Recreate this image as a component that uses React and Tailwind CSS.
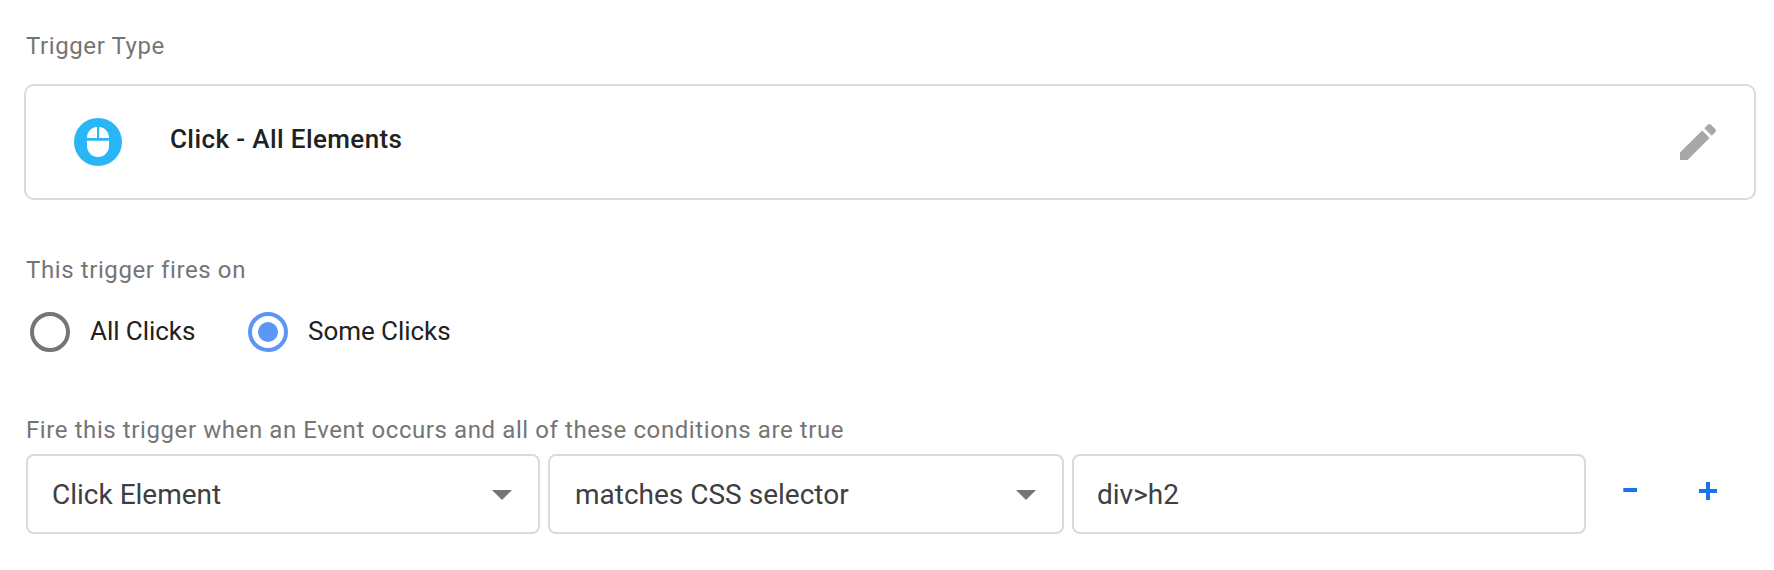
const Label = ({ children, className = "" }) => (
  <div className={"ml-[26px] h-8 whitespace-nowrap text-[24px] leading-8 text-[#757575] " + className}>{children}</div>
);

const Field = ({ text, arrow, className = "" }) => (
  <div className={"flex h-20 shrink-0 items-center justify-between rounded-lg border-2 border-[#dadada] pr-[26px] pt-0.5 text-[28px] text-[#3c4043] " + className}>
    <span className="whitespace-nowrap">{text}</span>
    {arrow && (
      <svg className="h-[10px] w-5" viewBox="0 0 20 10"><path d="M0 0h20L10 10z" fill="#757575" /></svg>
    )}
  </div>
);

const Radio = ({ text, checked, className = "" }) => (
  <div className={"flex items-center " + className}>
    <svg className="mr-5 h-10 w-10" viewBox="0 0 40 40">
      <circle cx="20" cy="20" r="18" fill="none" stroke={checked ? "#5b95f5" : "#757575"} strokeWidth="4" />
      {checked && <circle cx="20" cy="20" r="10" fill="#5b95f5" />}
    </svg>
    <span className="-mt-0.5 whitespace-nowrap text-[26px] leading-[38px] tracking-[-0.05px] text-[#212121]">{text}</span>
  </div>
);

export default function App() {
  return (
    <main className="h-[570px] w-[1774px] overflow-hidden bg-white pt-[30px] font-['Roboto',sans-serif]">
      <Label className="tracking-[0.6px]">Trigger Type</Label>
      <section className="ml-6 mt-[22px] flex h-[116px] w-[1732px] items-center rounded-[10px] border-2 border-[#dadada] pl-12 pr-8">
        <svg className="h-12 w-12" viewBox="0 0 48 48">
          <circle cx="24" cy="24" r="24" fill="#29b6f6" />
          <path d="M13 20C13 14 17 9.500 23 9v11zM25.200 9C31 9.500 35 14 35 20h-9.800zM13 22.700h22v5.300a11 11 0 0 1-22 0z" fill="#fff" />
        </svg>
        <h1 className="mb-1.5 ml-12 flex-1 text-[26px] font-medium tracking-[0.4px] text-[#212121]">Click - All Elements</h1>
        <svg className="h-12 w-12" viewBox="0 0 24 24" fill="#a8a8a8">
          <path d="M3 17.25V21h3.75L17.81 9.94l-3.75-3.75L3 17.25zM20.71 7.04a1 1 0 0 0 0-1.41l-2.34-2.34a1 1 0 0 0-1.41 0l-1.83 1.83 3.75 3.75 1.83-1.83z" />
        </svg>
      </section>
      <Label className="mt-[54px] tracking-[0.6px]">This trigger fires on</Label>
      <div className="ml-[30px] mt-[26px] flex">
        <Radio text="All Clicks" className="w-[218px]" />
        <Radio text="Some Clicks" checked />
      </div>
      <Label className="mt-[62px] tracking-[0.59px]">Fire this trigger when an Event occurs and all of these conditions are true</Label>
      <div className="ml-[26px] mt-2 flex items-center">
        <Field text="Click Element" arrow className="w-[514px] pl-6" />
        <Field text="matches CSS selector" arrow className="ml-2 w-[516px] pl-[25px]" />
        <Field text="div>h2" className="ml-2 w-[514px] pl-[23px]" />
        <svg className="ml-9 h-8 w-[100px]" viewBox="0 0 100 32" fill="#1a73e8">
          <path d="M1.300 10h13.700v4H1.300zM77 11h7V4h4v7h7v4h-7v7h-4v-7h-7z" />
        </svg>
      </div>
    </main>
  );
}
